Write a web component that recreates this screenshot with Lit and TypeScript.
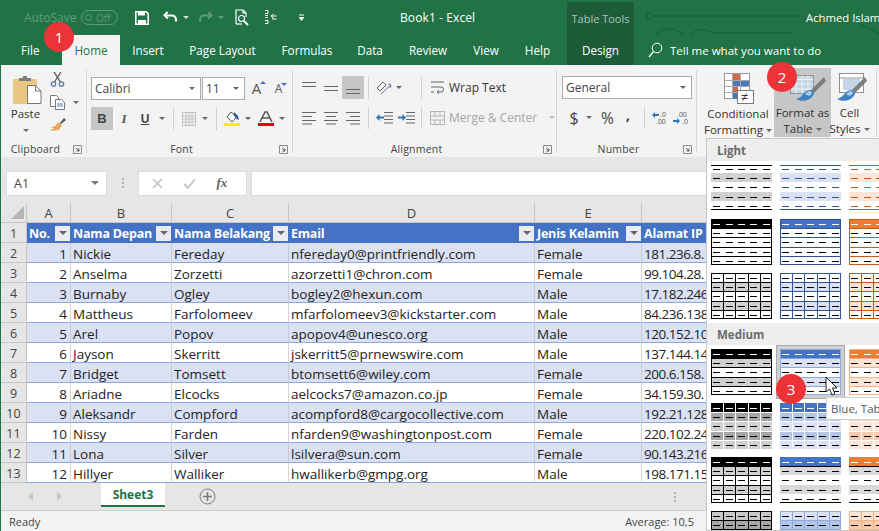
import { LitElement, html, css, svg } from "lit";
import { customElement } from "lit/decorators.js";

type Pal = { main: string; band: string; dark: string; line: string; dash: string };
const BLACK: Pal = { main: "#000", band: "#d0d0d0", dark: "#a6a6a6", line: "#000", dash: "#000" };
const BLUE: Pal = { main: "#4472c4", band: "#d9e1f2", dark: "#b4c6e7", line: "#2f5597", dash: "#2f5597" };
const ORANGE: Pal = { main: "#ed7d31", band: "#fce4d6", dark: "#f8cbad", line: "#c55a11", dash: "#c55a11" };

const RY = [0, 9, 18, 28, 37, 46];
const CX = [2, 15, 27, 39, 52];

function dashes(rowColor: (r: number) => string) {
  const out = [];
  for (let r = 0; r < 5; r++) {
    const y = Math.round((RY[r] + RY[r + 1]) / 2);
    for (const x of CX) out.push(svg`<rect x=${x} y=${y} width="7" height="1" fill=${rowColor(r)}></rect>`);
  }
  return out;
}
function fillRow(r: number, c: string) {
  return svg`<rect x="0" y=${RY[r]} width="61" height=${RY[r + 1] - RY[r]} fill=${c}></rect>`;
}
function hLines(c: string) {
  return [1, 2, 3, 4].map((r) => svg`<rect x="0" y=${RY[r]} width="61" height="1" fill=${c}></rect>`);
}
function vLines(c: string) {
  return [12, 24, 37, 49].map((x) => svg`<rect x=${x} y="0" width="1" height="46" fill=${c}></rect>`);
}
function frame(c: string) {
  return svg`<rect x="0.5" y="0.5" width="60" height="45" fill="none" stroke=${c}></rect>`;
}
function thumb(kind: string, p: Pal, extraClass = "") {
  let body: unknown[] = [];
  const blk = () => "#000";
  if (kind === "l1") {
    body = [fillRow(1, p.band), fillRow(3, p.band),
      svg`<rect x="0" y="1" width="61" height="1" fill=${p.line}></rect>`,
      svg`<rect x="0" y="45" width="61" height="1" fill=${p.line}></rect>`,
      dashes(() => p.dash)];
  } else if (kind === "l2") {
    body = [fillRow(0, p.main), hLines(p.line), frame(p.line), dashes((r) => (r === 0 ? "#fff" : "#000"))];
  } else if (kind === "l3") {
    body = [fillRow(1, p.band), fillRow(3, p.band), hLines(p.line), vLines(p.line), frame(p.line), dashes(blk)];
  } else if (kind === "m1") {
    const edge = p === BLACK ? "#000" : p === BLUE ? "#8ea9db" : "#f4b183";
    body = [fillRow(1, p.band), fillRow(3, p.band), hLines(edge), fillRow(0, p.main), frame(edge),
      dashes((r) => (r === 0 ? "#fff" : "#000"))];
  } else if (kind === "m2") {
    body = [fillRow(0, p.main), fillRow(1, p.dark), fillRow(2, p.band), fillRow(3, p.dark), fillRow(4, p.band),
      hLines("#fff"), vLines("#fff"), dashes((r) => (r === 0 ? "#fff" : "#000"))];
  } else if (kind === "m3g") {
    body = [fillRow(1, p.band), fillRow(3, p.band), hLines("#000"), vLines("#000"), fillRow(0, "#000"), frame("#000"),
      dashes((r) => (r === 0 ? "#fff" : "#000"))];
  } else if (kind === "m3") {
    body = [fillRow(1, "#d9d9d9"), fillRow(3, "#d9d9d9"), fillRow(0, p.main),
      svg`<rect x="0" y="9" width="61" height="1" fill="#000"></rect>`,
      svg`<rect x="0" y="45" width="61" height="1" fill="#000"></rect>`,
      dashes((r) => (r === 0 ? "#fff" : "#000"))];
  } else {
    const edge = p === BLACK ? "#000" : p === BLUE ? "#8ea9db" : "#f4b183";
    const a = p === BLACK ? "#c8c8c8" : p.band;
    body = [fillRow(0, a), fillRow(1, p.dark), fillRow(2, a), fillRow(3, p.dark), fillRow(4, a),
      hLines(edge), vLines(edge), frame(edge), dashes(blk)];
  }
  return html`<svg class="thumb ${extraClass}" width="61" height="46" viewBox="0 0 61 46" shape-rendering="crispEdges">${body}</svg>`;
}

const ROWS: string[][] = [
  ["1", "Nickie", "Fereday", "nfereday0@printfriendly.com", "Female", "181.236.8."],
  ["2", "Anselma", "Zorzetti", "azorzetti1@chron.com", "Female", "99.104.28."],
  ["3", "Burnaby", "Ogley", "bogley2@hexun.com", "Male", "17.182.246"],
  ["4", "Mattheus", "Farfolomeev", "mfarfolomeev3@kickstarter.com", "Male", "84.236.138"],
  ["5", "Arel", "Popov", "apopov4@unesco.org", "Male", "120.152.10"],
  ["6", "Jayson", "Skerritt", "jskerritt5@prnewswire.com", "Male", "137.144.14"],
  ["7", "Bridget", "Tomsett", "btomsett6@wiley.com", "Female", "200.6.158."],
  ["8", "Ariadne", "Elcocks", "aelcocks7@amazon.co.jp", "Female", "34.159.30."],
  ["9", "Aleksandr", "Compford", "acompford8@cargocollective.com", "Male", "192.21.128"],
  ["10", "Nissy", "Farden", "nfarden9@washingtonpost.com", "Female", "220.102.24"],
  ["11", "Lona", "Silver", "lsilvera@sun.com", "Female", "90.143.216"],
  ["12", "Hillyer", "Walliker", "hwallikerb@gmpg.org", "Male", "198.171.15"],
];
const HEADS = ["No.", "Nama Depan", "Nama Belakang", "Email", "Jenis Kelamin", "Alamat IP"];

const caret = html`<i class="caret"></i>`;
const launcher = html`<svg class="launch" width="9" height="9" viewBox="0 0 9 9"><path d="M.5 8.5V.5h8v8z" fill="none" stroke="#8a8a8a"/><path d="M3 3l3 3M6 3.5V6H3.5" fill="none" stroke="#555"/></svg>`;
const valign = (a: number, b: number) => html`<svg width="14" height="16" viewBox="0 0 14 16"><rect x="0" y=${a} width="14" height="1" fill="#666"></rect><rect x="0" y=${b} width="14" height="1" fill="#666"></rect></svg>`;
const brush = svg`
  <path d="M36 4L23 17l3 3L38 8z" fill="#7d7d7d"/>
  <path d="M23 17c-3 0-5 1-7 3-2 3-4 5-8 6 5 3 13 2 16-2 2-2 2-4 2-4z" fill="#3d83c0"/>
  <path d="M22 18c-2 0-4 2-5 3l4 2c2-1 3-3 3-3z" fill="#a9cbe6"/>`;

@customElement("app-root")
export class AppRoot extends LitElement {
  static styles = css`
    :host { display: block; width: 879px; height: 531px; position: relative; overflow: hidden; font-family: "Open Sans", "Noto Sans", sans-serif; background: #e6e6e6; color: #333; }
    * { box-sizing: border-box; }
    svg { display: block; flex: none; }
    .top { background: #217346; height: 65px; position: relative; color: #fff; font-size: 12px; }
    .circuit { position: absolute; left: 634px; top: 0; }
    .titlebar { height: 35px; display: grid; grid-template-columns: 24px 57px 54px 28px 20px 15px 20px 17px 29px 34px 102px 167px 67px 172px 1fr; align-items: center; justify-items: start; position: relative; }
    .autosave { color: #5f9c7c; font-size: 12px; }
    .toggle { width: 37px; height: 15px; border: 1px solid #5f9c7c; border-radius: 8px; display: flex; align-items: center; gap: 4px; padding-left: 3px; color: #5f9c7c; font-size: 10px; line-height: 1; }
    .toggle i { width: 7px; height: 7px; border: 1px solid #5f9c7c; border-radius: 50%; }
    .tcaret { width: 0; height: 0; border: 3px solid transparent; border-top-color: #cfe0d6; border-bottom: 0; }
    .tcaret.dim { border-top-color: #5f9c7c; }
    .book { font-size: 12px; white-space: nowrap; letter-spacing: .1px; }
    .tools { align-self: end; justify-self: stretch; height: 33px; background: #1e5b39; color: #a9c6b5; display: flex; align-items: center; justify-content: center; font-size: 11px; white-space: nowrap; }
    .user { font-size: 11.3px; white-space: nowrap; }
    .tabs { height: 30px; display: grid; grid-template-columns: 62px 58px 56px 93px 76px 50px 66px 50px 53px 3px 67px 14px 22px 1fr; align-items: center; justify-items: center; position: relative; font-size: 11.7px; }
    .tab.file { justify-self: start; padding-left: 21px; }
    .tab.home { align-self: stretch; justify-self: stretch; background: #f3f3f3; color: #217346; display: flex; align-items: center; justify-content: center; }
    .tab.design { align-self: stretch; justify-self: stretch; background: #1e5b39; display: flex; align-items: center; justify-content: center; }
    .search { justify-self: start; }
    .tell { justify-self: start; white-space: nowrap; font-size: 11.5px; }

    .body { border-left: 1px solid #217346; height: 466px; display: flex; flex-direction: column; }
    .ribbon { height: 93px; background: #f3f3f3; border-bottom: 1px solid #d2d2d2; display: flex; flex: none; font-size: 11px; color: #333; }
    .group { height: 83px; margin-top: 5px; border-right: 1px solid #d6d6d6; display: flex; flex-direction: column; flex: none; position: relative; }
    .g-clip { width: 86px; }
    .g-font { width: 206px; padding: 7px 0 0 4px; }
    .g-align { width: 264px; padding: 6px 0 0 5px; }
    .g-num { width: 140px; padding: 6px 0 0 5px; }
    .g-style { width: 180px; flex-direction: row; margin-top: 3px; height: 69px; }
    .label { margin-top: auto; margin-bottom: -3px; height: 14px; line-height: 14px; display: flex; align-items: center; font-size: 10.5px; color: #444; letter-spacing: .2px; }
    .label span { flex: 1; text-align: center; }
    .label .launch { margin: 0 4px 0 3px; }
    .g-font .label { margin-left: -4px; }
    .g-align .label, .g-num .label { margin-left: -5px; }
    .clip-main { display: grid; grid-template-columns: 46px 1fr; }
    .paste { padding: 6px 0 0 3px; display: flex; flex-direction: column; align-items: center; font-size: 11.5px; gap: 2px; width: 46px; }
    .paste svg { margin-left: 4px; }
    .paste .caret { margin-top: 6px; }
    .clip-small { display: flex; flex-direction: column; gap: 8px; padding: 2px 0 0 3px; }
    .clip-row { display: flex; align-items: center; gap: 8px; }
    .caret { display: block; width: 0; height: 0; border: 3px solid transparent; border-top: 3px solid #666; border-bottom: 0; flex: none; }
    .row { display: grid; align-items: center; justify-items: center; height: 23px; }
    .r1 { grid-template-columns: 110px 1px 43px 6px 16px 6px 16px; margin-bottom: 7px; }
    .r2 { grid-template-columns: 22px 22px 20px 14px 8px 23px 10px 12px 20px 12px 24px 8px; }
    .select { justify-self: stretch; height: 23px; background: #fff; border: 1px solid #ababab; display: flex; align-items: center; justify-content: space-between; padding: 0 5px 0 3px; font-size: 12px; color: #444; }
    .gapv { height: 22px; width: 1px; background: #d0d0d0; }
    .btn-on { justify-self: stretch; height: 23px; background: #c6c6c6; display: flex; align-items: center; justify-content: center; }
    .b { font: bold 13px "Liberation Sans", sans-serif; color: #444; }
    .it { font: italic bold 13px "Liberation Serif", serif; color: #555; }
    .un { font: bold 12px "Liberation Sans", sans-serif; color: #444; text-decoration: underline; }
    .ga { font: 15px "Open Sans", sans-serif; color: #555; display: flex; line-height: 1; }
    .ga.small { font-size: 12px; align-items: flex-end; }
    .ga sup { font-size: 0; width: 0; height: 0; border: 3px solid transparent; border-bottom: 3px solid #4472c4; border-top: 0; margin: 0 0 0 -1px; }
    .ga.small sup { align-self: flex-start; }
    .ga sup.down { border-bottom: 0; border-top: 3px solid #4472c4; }
    .a1, .a2 { grid-template-columns: 22px 22px 22px 8px 24px 6px 17px 4px 1fr; width: 254px; }
    .a1 { margin-bottom: 7px; }
    .a2 { grid-template-columns: 22px 22px 22px 8px 24px 20px 3px 4px 1fr; }
    .wrap { justify-self: start; display: flex; align-items: center; gap: 4px; font-size: 12px; color: #333; white-space: nowrap; padding-left: 7px; }
    .merge { color: #a5a5a5; }
    .merge .caret { border-top-color: #bbb; margin-left: 8px; }
    .num-sel { width: 130px; margin-bottom: 7px; display: flex; }
    .num-sel .select { flex: 1; }
    .n2 { grid-template-columns: 24px 6px 5px 21px 20px 12px 21px 21px; width: 130px; }
    .dollar { font: 16px "Open Sans", sans-serif; color: #444; }
    .pct { font: 15.500px "Open Sans", sans-serif; color: #444; }
    .comma { font: bold 15px "Open Sans", sans-serif; color: #444; line-height: 1; margin-top: -6px; }
    .style-btn { display: flex; flex-direction: column; align-items: center; font-size: 11.5px; line-height: 16px; color: #333; flex: none; padding-top: 5px; height: 69px; }
    .ico { height: 33px; }
    .txt { text-align: center; white-space: nowrap; margin-top: 0; }
    .txt .caret { display: inline-block; vertical-align: middle; margin-left: 3px; }
    .sb1 { width: 77px; padding-left: 5px; }
    .sb2 { width: 57px; background: #c6c6c6; }
    .sb2 .ico { margin-left: 8px; }
    .sb3 { width: 37px; }

    .fbar { height: 46px; flex: none; background: #e6e6e6; display: flex; align-items: center; padding-left: 5px; margin-top: -1px; padding-top: 6px; }
    .namebox { width: 101px; height: 25px; background: #fff; border: 1px solid #dcdcdc; display: flex; align-items: center; justify-content: space-between; padding: 0 7px; font-size: 12.5px; color: #444; }
    .namebox .caret { border-width: 4px; border-top-color: #777; }
    .dots { width: 31px; display: flex; flex-direction: column; align-items: center; gap: 2px; }
    .dots i { width: 2px; height: 2px; background: #b4b4b4; }
    .fx { width: 109px; height: 25px; background: #fff; border: 1px solid #dcdcdc; display: grid; grid-template-columns: 1fr 1fr 1fr; align-items: center; justify-items: center; padding: 0 8px 0 2px; }
    .fxt { font: italic bold 13px "Liberation Serif", serif; color: #666; }
    .finput { flex: 1; height: 25px; margin-left: 4px; background: #fff; border: 1px solid #dcdcdc; }

    .grid { flex: none; display: grid; grid-template-columns: 26px 44px 101px 117px 246px 107px 238px; grid-auto-rows: 20px; font-size: 13.5px; color: #222; background: #fff; height: 280px; overflow: hidden; }
    .corner { background: #e6e6e6; display: flex; align-items: flex-end; justify-content: flex-end; padding: 0 2px 3px 0; border-right: 1px solid #c6c6c6; border-bottom: 1px solid #c6c6c6; }
    .col { background: #e6e6e6; color: #444; font-size: 13px; display: flex; align-items: center; justify-content: center; border-right: 1px solid #c6c6c6; border-bottom: 1px solid #c6c6c6; }
    .rh { background: #e6e6e6; color: #444; display: flex; align-items: center; justify-content: center; border-right: 1px solid #c6c6c6; border-bottom: 1px solid #c6c6c6; font-size: 12.5px; padding-top: 1px; }
    .th { background: #4472c4; color: #fff; font-weight: 700; font-size: 12.500px; letter-spacing: -.2px; display: flex; align-items: center; justify-content: space-between; padding: 1px 1px 0 2px; white-space: nowrap; overflow: hidden; }
    .fb { width: 15px; height: 15px; background: #e9ebf0; display: flex; align-items: center; justify-content: center; flex: none; margin-top: -1px; }
    .fb i { width: 0; height: 0; border: 4px solid transparent; border-top: 4px solid #666; border-bottom: 0; }
    .td { border-bottom: 1px solid #8ea9db; border-right: 1px solid #d4d4d4; padding: 2px 0 0 2px; display: flex; align-items: center; white-space: nowrap; }
    .td.band { background: #d9e1f2; border-right-color: #c3cbdd; }
    .td.numc { justify-content: flex-end; padding-right: 3px; }
    .td.ip { letter-spacing: -.5px; }

    .sheetbar { height: 27px; flex: none; background: #e6e6e6; display: grid; grid-template-columns: 100px 64px 1fr; position: relative; }
    .nav { display: flex; align-items: center; gap: 22px; padding-left: 27px; }
    .sheet { height: 24px; background: #fff; border-bottom: 2px solid #217346; display: flex; align-items: center; justify-content: center; color: #217346; font-weight: 700; font-size: 12px; }
    .after { display: flex; align-items: center; padding-left: 34px; gap: 0; }
    .after .dots { margin-left: 456px; width: 6px; }
    .status { flex: 1; background: #f3f3f3; border-top: 1px solid #cfcfcf; display: flex; justify-content: space-between; align-items: center; padding: 0 185px 0 8px; font-size: 11px; color: #444; }

    .panel { position: absolute; left: 706px; top: 138px; width: 260px; height: 393px; background: #fff; border: 1px solid #c8c8c8; overflow: hidden; }
    .ph { height: 22px; background: #eeeeee; font-weight: 700; font-size: 11.5px; color: #6b6b6b; display: flex; align-items: center; padding-left: 10px; }
    .pgrid { display: grid; grid-template-columns: repeat(3, 61px); column-gap: 8px; padding: 3px 0 4px 4px; grid-auto-rows: 46px; row-gap: 8.5px; }
    .pgrid.med { padding-top: 4px; row-gap: 8px; }
    .thumb.sel { box-shadow: 0 0 0 3px #cfcfcf, 0 0 0 4px #a9a9a9; background: #fff; }
    .badge { position: absolute; width: 30px; height: 30px; border-radius: 50%; background: #ee3338; color: #fff; display: flex; align-items: center; justify-content: center; font-size: 15px; }
    .b1 { left: 44px; top: 22px; }
    .b2 { left: 767px; top: 62px; }
    .b3 { left: 776px; top: 374px; }
    .tip { position: absolute; left: 826px; top: 397px; width: 170px; height: 23px; background: #fff; border: 1px solid #cfcfcf; font-size: 11.5px; color: #555; display: flex; align-items: center; padding-left: 4px; white-space: nowrap; }
    .cursor { position: absolute; left: 825px; top: 376px; }
  `;

  render() {
    return html`
      <div class="top">
        <svg class="circuit" width="245" height="65" viewBox="0 0 245 65" fill="none" stroke="#1b663c" stroke-width="2">
          <circle cx="16" cy="16" r="3.5"/><path d="M20 16H165"/><path d="M22 35c3-7 20-9 26 0M58 35c2-7 16-6 20-2h80"/><path d="M226 24l20 10"/>
        </svg>
        <div class="titlebar">
          <span></span>
          <span class="autosave">AutoSave</span>
          <span class="toggle"><i></i>Off</span>
          <svg width="14" height="14" viewBox="0 0 14 14"><path d="M.8.8h10.4l2 2v10.4H.8z" fill="none" stroke="#fff" stroke-width="1.6"/><path d="M3 1h7v3.6H3zM3 9h8v4H3z" fill="#fff"/></svg>
          <svg width="15" height="13" viewBox="0 0 15 13" fill="none" stroke="#fff" stroke-width="2"><path d="M4.500 1L1.500 4.500 5 7.500"/><path d="M2 4.500h7a4 4 0 0 1 3.500 6"/></svg>
          <i class="tcaret"></i>
          <svg width="15" height="13" viewBox="0 0 15 13" fill="none" stroke="#5f9c7c" stroke-width="2"><path d="M10.500 1l3 3.500L10 7.500"/><path d="M13 4.500H6a4 4 0 0 0-3.500 6"/></svg>
          <i class="tcaret dim"></i>
          <svg width="14" height="17" viewBox="0 0 14 17" fill="none" stroke="#fff" stroke-width="1.2"><path d="M1 15V1h7l3 3v4"/><path d="M8 1v3h3"/><circle cx="6.500" cy="9.500" r="3"/><path d="M9 12l4 4" stroke-width="2"/><path d="M1 15h6"/></svg>
          <svg width="13" height="17" viewBox="0 0 13 17" fill="none" stroke="#fff"><path d="M1 1.500h3v3H1M1 6.500h3M1 8.500h3M1 11.500h3v3H1"/><path d="M12.500 7H7M7 7l2.500-2M7 7l2.500 2M12.500 10H8"/></svg>
          <svg width="7" height="9" viewBox="0 0 7 9"><path d="M1 1.500h5V2.500H1zM.5 4h6L3.500 8z" fill="#fff"/></svg>
          <span class="book">Book1 - Excel</span>
          <span class="tools">Table Tools</span>
          <span></span>
          <span class="user">Achmed Islam</span>
        </div>
        <div class="tabs">
          <span class="tab file">File</span>
          <span class="tab home">Home</span>
          <span class="tab">Insert</span>
          <span class="tab">Page Layout</span>
          <span class="tab">Formulas</span>
          <span class="tab">Data</span>
          <span class="tab">Review</span>
          <span class="tab">View</span>
          <span class="tab">Help</span>
          <span></span>
          <span class="tab design">Design</span>
          <span></span>
          <svg class="search" width="15" height="16" viewBox="0 0 15 16" fill="none" stroke="#fff"><circle cx="9" cy="6" r="4.800"/><path d="M5.500 9.500L1 15" stroke-width="1.300"/></svg>
          <span class="tell">Tell me what you want to do</span>
        </div>
      </div>

      <div class="body">
        <div class="ribbon">
          <section class="group g-clip">
            <div class="clip-main">
              <div class="paste">
                <svg width="29" height="28" viewBox="0 0 29 28">
                  <rect x="0" y="3" width="24" height="25" rx="1" fill="#eac685"/>
                  <path d="M6 4V2h4V0h4v2h4v3H6z" fill="#7d7d7d"/>
                  <path d="M14.500 9.500h8l5.500 5.500v12.500H14.500z" fill="#fff" stroke="#777"/>
                  <path d="M22.500 9.500V15H28" fill="none" stroke="#777"/>
                </svg>
                <span>Paste</span>
                ${caret}
              </div>
              <div class="clip-small">
                <svg width="15" height="15" viewBox="0 0 15 15" fill="none" stroke="#5b7fa8" stroke-width="1.300"><circle cx="3.500" cy="12" r="2.200"/><circle cx="11.500" cy="12" r="2.200"/><path d="M4.500 10L11 0M10.500 10L4 0" stroke="#555"/></svg>
                <div class="clip-row">
                  <svg width="15" height="15" viewBox="0 0 15 15" fill="#fff" stroke="#777"><path d="M.5.500h6l2 2v9h-8z"/><path d="M5.500 4.500h6l3 3v7h-9z"/><path d="M7 9h6M7 11h6" stroke="#5b7fa8"/></svg>
                  ${caret}
                </div>
                <svg width="16" height="15" viewBox="0 0 16 15"><path d="M10 5l4-5 2 2-5 4z" fill="#555"/><path d="M9 4l3 3-3 5-9 1 4-3-3 0 4-2z" fill="#e4a95c"/></svg>
              </div>
            </div>
            <div class="label"><span>Clipboard</span>${launcher}</div>
          </section>

          <section class="group g-font">
            <div class="row r1">
              <div class="select"><span>Calibri</span>${caret}</div>
              <span></span>
              <div class="select"><span>11</span>${caret}</div>
              <span></span>
              <span class="ga">A<sup></sup></span>
              <span></span>
              <span class="ga small">A<sup class="down"></sup></span>
            </div>
            <div class="row r2">
              <span class="btn-on"><span class="b">B</span></span>
              <span class="it">I</span>
              <span class="un">U</span>
              ${caret}
              <i class="gapv"></i>
              <svg width="14" height="14" viewBox="0 0 14 14" fill="none" stroke="#999" stroke-dasharray="1 1"><path d="M.5.500h13v13H.5zM.5 7h13M7 .5v13M4 .5v13M10 .5v13M.5 4h13M.5 10h13"/></svg>
              ${caret}
              <i class="gapv"></i>
              <svg width="16" height="15" viewBox="0 0 16 15"><path d="M7 1l6 5-5 5-5-5z" fill="#fff" stroke="#555"/><path d="M10 1l4 4 1 4-2-1-3-3z" fill="#2f5597"/><rect x="0" y="12" width="16" height="3" fill="#ffea00"/></svg>
              ${caret}
              <svg width="16" height="15" viewBox="0 0 16 15"><path d="M2 11L7 1h2l5 10M4.500 7h7" fill="none" stroke="#555" stroke-width="1.500"/><rect x="0" y="12" width="16" height="3" fill="#e2001a"/></svg>
              ${caret}
            </div>
            <div class="label"><span>Font</span>${launcher}</div>
          </section>

          <section class="group g-align">
            <div class="row a1">
              ${valign(2, 6)}
              ${valign(6, 10)}
              <span class="btn-on">${valign(9, 13)}</span>
              <i class="gapv"></i>
              <svg width="17" height="16" viewBox="0 0 17 16" fill="none" stroke="#666"><path d="M1 8l6-6 3 3-6 6z"/><path d="M5 14L15 5M12 4l3 1-1 3" stroke="#5b7fa8"/></svg>
              ${caret}
              <span></span>
              <i class="gapv"></i>
              <span class="wrap"><svg width="15" height="15" viewBox="0 0 15 15" fill="none" stroke="#666"><path d="M1 2h13M1 7h10a2.500 2.500 0 0 1 0 5H7"/><path d="M9 10l-2 2 2 2" stroke="#4472c4"/><path d="M1 12h3"/></svg>Wrap Text</span>
            </div>
            <div class="row a2">
              <svg width="14" height="14" viewBox="0 0 14 14" fill="#666"><path d="M0 1h14v1H0zM0 5h10v1H0zM0 9h14v1H0zM0 12.500h10v1H0z"/></svg>
              <svg width="14" height="14" viewBox="0 0 14 14" fill="#666"><path d="M0 1h14v1H0zM2 5h10v1H2zM0 9h14v1H0zM2 12.500h10v1H2z"/></svg>
              <svg width="14" height="14" viewBox="0 0 14 14" fill="#666"><path d="M0 1h14v1H0zM4 5h10v1H4zM0 9h14v1H0zM4 12.500h10v1H4z"/></svg>
              <i class="gapv"></i>
              <svg width="17" height="13" viewBox="0 0 17 13"><path d="M8 1h9v1H8zM8 4.500h9v1H8zM8 8h9v1H8zM8 11.500h9v1H8z" fill="#666"/><path d="M0 6.500l3.500-3.500v2.500H8v2H3.500V10z" fill="#2e75b6"/></svg>
              <svg width="17" height="13" viewBox="0 0 17 13"><path d="M8 1h9v1H8zM8 4.500h9v1H8zM8 8h9v1H8zM8 11.500h9v1H8z" fill="#666"/><path d="M8 6.500L4.500 3v2.500H0v2h4.500V10z" fill="#2e75b6"/></svg>
              <span></span>
              <i class="gapv"></i>
              <span class="wrap merge"><svg width="15" height="14" viewBox="0 0 15 14" fill="none" stroke="#b5b5b5"><path d="M.5.500h14v13H.5zM.5 5h14M.5 9h14M5 .5v4M10 .5v4M5 9v4.500M10 9v4.500"/></svg>Merge &amp; Center${caret}</span>
            </div>
            <div class="label"><span>Alignment</span>${launcher}</div>
          </section>

          <section class="group g-num">
            <div class="num-sel"><div class="select"><span>General</span>${caret}</div></div>
            <div class="row n2">
              <span class="dollar">$</span>
              ${caret}
              <span></span>
              <span class="pct">%</span>
              <span class="comma">,</span>
              <i class="gapv"></i>
              <svg width="18" height="14" viewBox="0 0 18 14"><path d="M0 4l3-3v2h4v2H3v2z" fill="#2e75b6"/><text x="8" y="6" font-size="7" fill="#555" font-family="Liberation Sans">.0</text><text x="4" y="13" font-size="7" fill="#555" font-family="Liberation Sans">.00</text></svg>
              <svg width="18" height="14" viewBox="0 0 18 14"><text x="4" y="6" font-size="7" fill="#555" font-family="Liberation Sans">.00</text><path d="M7 11L4 8v2H0v2h4v2z" transform="translate(0 -1)" fill="#2e75b6"/><text x="9" y="13" font-size="7" fill="#555" font-family="Liberation Sans">.0</text></svg>
            </div>
            <div class="label"><span>Number</span>${launcher}</div>
          </section>

          <section class="group g-style">
            <div class="style-btn sb1">
              <div class="ico">
                <svg width="31" height="33" viewBox="0 0 31 33" shape-rendering="crispEdges">
                  <rect x="1.500" y=".5" width="25" height="25" fill="#fff" stroke="#999"/>
                  <path d="M9 1h8v6H9z" fill="#d2694a"/><path d="M9 7h17v6H9z" fill="#4a7ab8"/><path d="M9 13h6v6H9z" fill="#d2694a"/><path d="M9 19h6v7H9z" fill="#4a7ab8"/>
                  <path d="M9 .5v25M17.500 .5v25M2 7h24M2 13h24M2 19h24" stroke="#aaa" fill="none"/>
                  <rect x="14.500" y="17.500" width="16" height="13" fill="#fff" stroke="#777"/>
                  <text x="18.500" y="28" font-size="12" fill="#333" font-family="Liberation Sans">≠</text>
                </svg>
              </div>
              <div class="txt">Conditional<br />Formatting${caret}</div>
            </div>
            <div class="style-btn sb2">
              <div class="ico">
                <svg width="38" height="30" viewBox="0 0 38 30">
                  <rect x="2.500" y="2.500" width="23" height="18" fill="#c5d5e8" stroke="#8f8f8f"/>
                  <path d="M2.500 6.500h23M2.500 11h23M2.500 16h23M8 2.500v18M14 2.500v18M20 2.500v18" stroke="#f0f0f0" fill="none"/>
                  ${brush}
                </svg>
              </div>
              <div class="txt">Format as<br />Table${caret}</div>
            </div>
            <div class="style-btn sb3">
              <div class="ico">
                <svg width="34" height="30" viewBox="0 0 34 30">
                  <rect x="6.500" y=".5" width="24" height="19" fill="#fff" stroke="#8f8f8f"/>
                  <rect x="10" y="6" width="17" height="11" fill="#c5d5e8"/>
                  <path d="M6.500 5h24" stroke="#8f8f8f" fill="none"/>
                  <g transform="translate(-4 0)">${brush}</g>
                </svg>
              </div>
              <div class="txt">Cell<br />Styles${caret}</div>
            </div>
          </section>
        </div>

        <div class="fbar">
          <div class="namebox"><span>A1</span>${caret}</div>
          <div class="dots"><i></i><i></i><i></i></div>
          <div class="fx">
            <svg width="11" height="11" viewBox="0 0 11 11" stroke="#c4c4c4" stroke-width="1.600"><path d="M1 1l9 9M10 1l-9 9"/></svg>
            <svg width="13" height="11" viewBox="0 0 13 11" fill="none" stroke="#c4c4c4" stroke-width="1.800"><path d="M1 6l4 4 7-9"/></svg>
            <span class="fxt">fx</span>
          </div>
          <div class="finput"></div>
        </div>

        <div class="grid">
          <div class="corner"><svg width="13" height="13" viewBox="0 0 13 13"><path d="M13 0v13H0z" fill="#b5b5b5"/></svg></div>
          ${["A", "B", "C", "D", "E", "F"].map((c) => html`<div class="col">${c}</div>`)}
          <div class="rh">1</div>
          ${HEADS.map((h) => html`<div class="th"><span>${h}</span>${h === "Alamat IP" ? "" : html`<span class="fb"><i></i></span>`}</div>`)}
          ${ROWS.map((r, i) => html`
            <div class="rh">${i + 2}</div>
            ${r.map((v, j) => html`<div class="td ${i % 2 === 0 ? "band" : ""} ${j === 0 ? "numc" : ""} ${j === 5 ? "ip" : ""}">${v}</div>`)}
          `)}
        </div>

        <div class="sheetbar">
          <div class="nav">
            <svg width="6" height="9" viewBox="0 0 6 9"><path d="M5 0v9L0 4.500z" fill="#c8c8c8"/></svg>
            <svg width="6" height="9" viewBox="0 0 6 9"><path d="M1 0v9l5-4.500z" fill="#c8c8c8"/></svg>
          </div>
          <div class="sheet">Sheet3</div>
          <div class="after">
            <svg width="17" height="17" viewBox="0 0 17 17" fill="none" stroke="#7a7a7a"><circle cx="8.500" cy="8.500" r="7.500"/><path d="M8.500 4v9M4 8.500h9" stroke-width="1.500"/></svg>
            <div class="dots"><i></i><i></i><i></i></div>
          </div>
        </div>
        <div class="status"><span>Ready</span><span>Average: 10,5</span></div>
      </div>

      <div class="panel">
        <div class="ph">Light</div>
        <div class="pgrid">
          ${thumb("l1", BLACK)}${thumb("l1", BLUE)}${thumb("l1", ORANGE)}
          ${thumb("l2", BLACK)}${thumb("l2", BLUE)}${thumb("l2", ORANGE)}
          ${thumb("l3", BLACK)}${thumb("l3", BLUE)}${thumb("l3", ORANGE)}
        </div>
        <div class="ph">Medium</div>
        <div class="pgrid med">
          ${thumb("m1", BLACK)}${thumb("m1", BLUE, "sel")}${thumb("m1", ORANGE)}
          ${thumb("m2", BLACK)}${thumb("m2", BLUE)}${thumb("m2", ORANGE)}
          ${thumb("m3g", BLACK)}${thumb("m3", BLUE)}${thumb("m3", ORANGE)}
          ${thumb("m4", BLACK)}${thumb("m4", BLUE)}${thumb("m4", ORANGE)}
        </div>
      </div>

      <div class="tip">Blue, Tab</div>
      <svg class="cursor" width="14" height="21" viewBox="0 0 14 21"><path d="M1 1v15l3.500-3 2.500 6 3-1.300-2.500-5.700H12z" fill="#fff" stroke="#222"/></svg>
      <span class="badge b1">1</span>
      <span class="badge b2">2</span>
      <span class="badge b3">3</span>
    `;
  }
}
